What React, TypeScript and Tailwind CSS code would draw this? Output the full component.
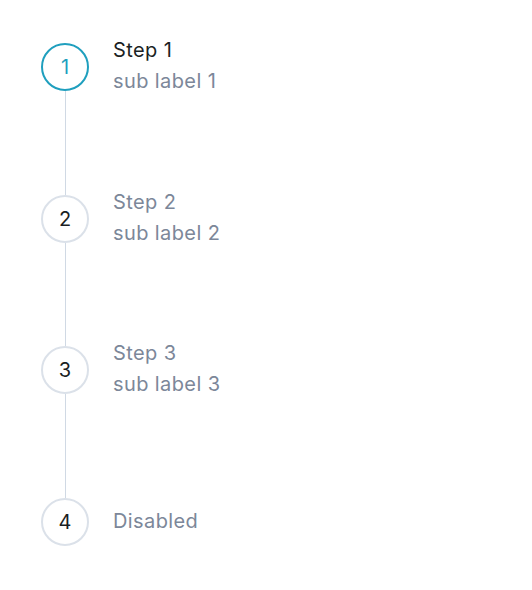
const steps = [
  { n: 1, label: "Step 1", desc: "sub label 1", active: true, gap: 104 },
  { n: 2, label: "Step 2", desc: "sub label 2", gap: 103 },
  { n: 3, label: "Step 3", desc: "sub label 3", gap: 104 },
  { n: 4, label: "Disabled" },
];

export default function App() {
  return (
    <div
      className="min-h-[590px] bg-white pt-[43px] pl-[41px]"
      style={{ fontFamily: "Inter, 'Noto Sans', sans-serif" }}
    >
      <div className="flex flex-col">
        {steps.map((s) => (
          <div key={s.n} className="flex flex-col">
            <div className="flex h-[48px] items-center">
              <div
                className={
                  "flex h-[48px] w-[48px] shrink-0 items-center justify-center rounded-full border-2 text-[20px] " +
                  (s.active ? "border-[#1f9fbe] text-[#1f9fbe]" : "border-[#dbe1e9] text-[#1b1f24]")
                }
              >
                {s.n}
              </div>
              <div className="-mt-[2px] ml-[24px] flex flex-col text-[20px] leading-[31px] tracking-[0.4px] whitespace-nowrap">
                <span className={s.active ? "text-[#1b1f24]" : "text-[#7c8799]"}>{s.label}</span>
                {s.desc && <span className="text-[#7c8799]">{s.desc}</span>}
              </div>
            </div>
            {s.gap && <div className="ml-[24px] w-px bg-[#d0d9e4]" style={{ height: s.gap }} />}
          </div>
        ))}
      </div>
    </div>
  );
}
